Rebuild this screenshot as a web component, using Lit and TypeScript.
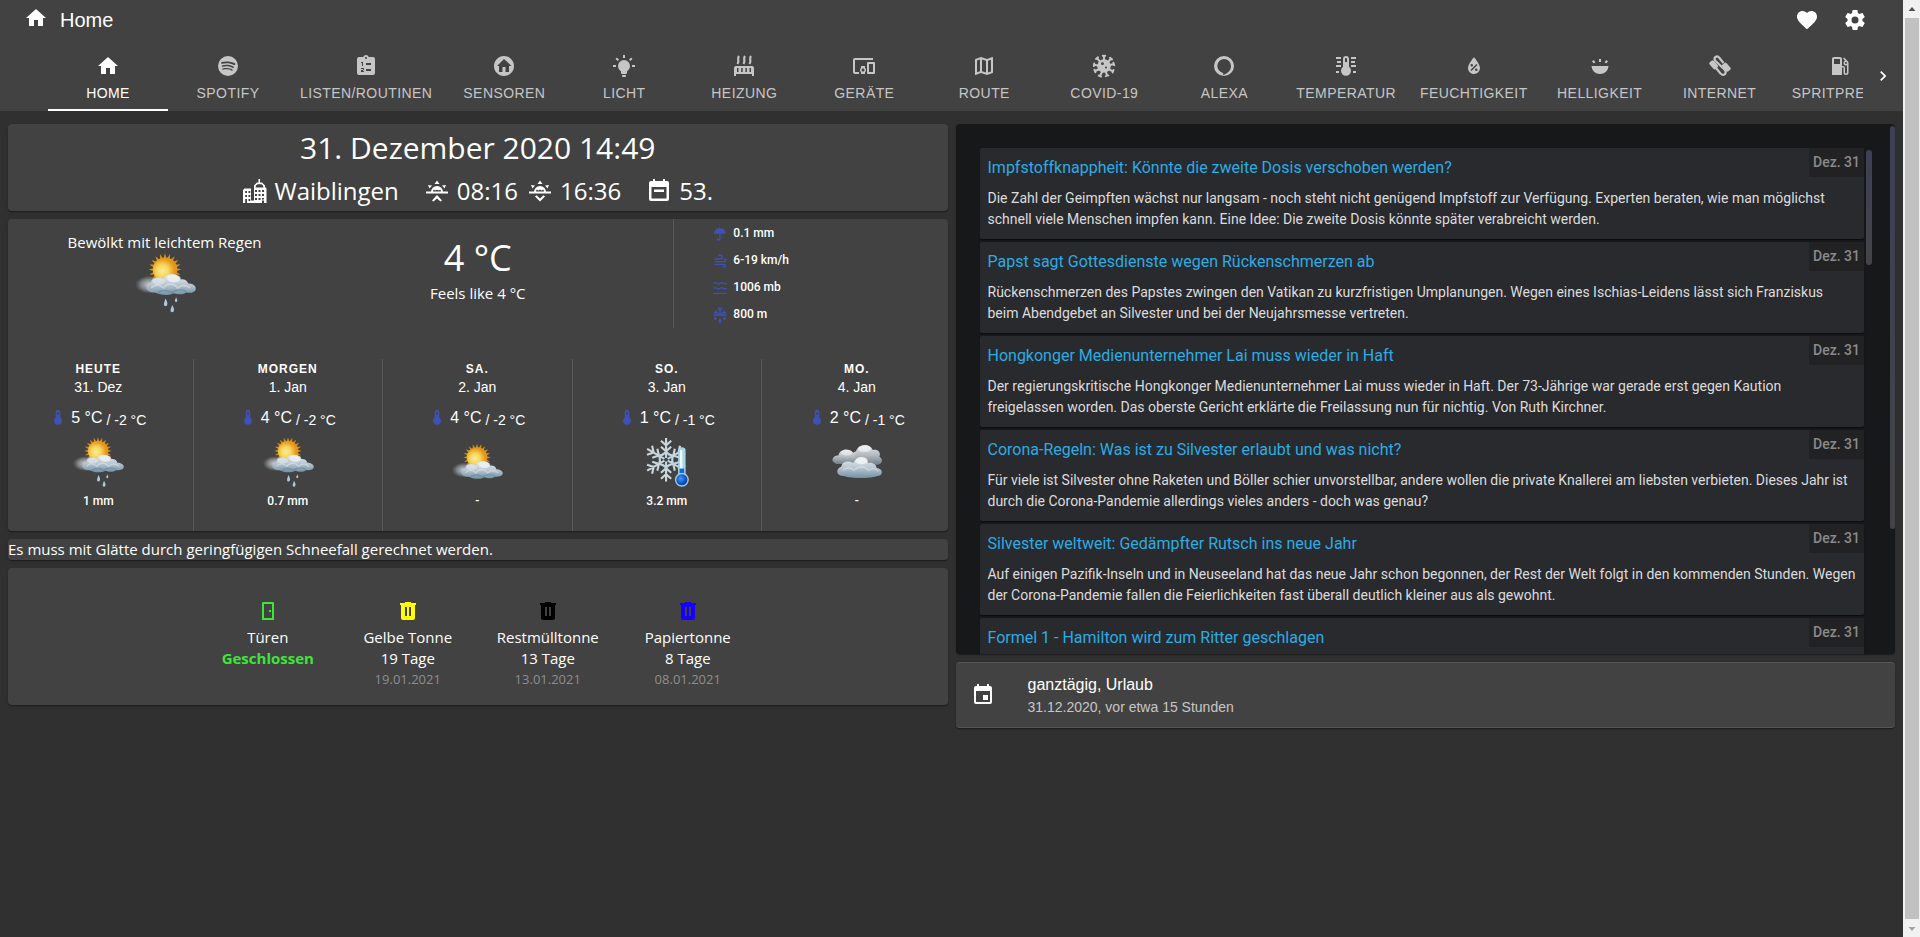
import { LitElement, html, css, svg, nothing } from "lit";
import { customElement, property, state } from "lit/decorators.js";
import { classMap } from "lit/directives/class-map.js";

const ICONS: Record<string, unknown> = {
  home: svg`<path d="M10,20V14H14V20H19V12H22L12,3L2,12H5V20H10Z"/>`,
  spotify: svg`<path d="M17.9,10.9C14.7,9 9.35,8.8 6.3,9.75C5.8,9.9 5.3,9.6 5.15,9.15C5,8.65 5.3,8.15 5.75,8C9.3,6.95 15.15,7.15 18.85,9.35C19.3,9.6 19.45,10.2 19.2,10.65C18.95,11 18.35,11.15 17.9,10.9M17.8,13.7C17.55,14.05 17.1,14.2 16.75,13.95C14.05,12.3 9.95,11.8 6.8,12.8C6.4,12.9 5.95,12.7 5.85,12.3C5.75,11.9 5.95,11.45 6.35,11.35C10,10.25 14.5,10.8 17.6,12.7C17.9,12.85 18.05,13.35 17.8,13.7M16.6,16.45C16.4,16.75 16.05,16.85 15.75,16.65C13.4,15.2 10.45,14.9 6.95,15.7C6.6,15.8 6.3,15.55 6.2,15.25C6.1,14.9 6.35,14.6 6.65,14.5C10.45,13.65 13.75,14 16.35,15.6C16.7,15.75 16.75,16.15 16.6,16.45M12,2A10,10 0 0,0 2,12A10,10 0 0,0 12,22A10,10 0 0,0 22,12A10,10 0 0,0 12,2Z"/>`,
  list: svg`<path fill-rule="evenodd" d="M5,3H9.2A3,3 0 0 1 14.8,3H19A2,2 0 0 1 21,5V19A2,2 0 0 1 19,21H5A2,2 0 0 1 3,19V5A2,2 0 0 1 5,3ZM12,3A1,1 0 1 0 12,5A1,1 0 1 0 12,3ZM12,9V11H17V9ZM12,15V17H17V15ZM7,8V9H8V12H9V8ZM7,14V15H9V16H7V18H10V17H8.4L10,15.6V14Z"/>`,
  sensors: svg`<path d="M19.07,4.93C17.22,3 14.66,1.96 12,2C9.34,1.96 6.79,3 4.94,4.93C3,6.78 1.96,9.34 2,12C1.96,14.66 3,17.21 4.93,19.06C6.78,21 9.34,22.04 12,22C14.66,22.04 17.21,21 19.06,19.07C21,17.22 22.04,14.66 22,12C22.04,9.34 21,6.78 19.07,4.93M17,12V18H13.5V13H10.5V18H7V12H5L12,5L19.5,12H17Z"/>`,
  light: svg`<path d="M12,6A6,6 0 0,1 18,12C18,14.22 16.79,16.16 15,17.2V19A1,1 0 0,1 14,20H10A1,1 0 0,1 9,19V17.2C7.21,16.16 6,14.22 6,12A6,6 0 0,1 12,6M14,21V22A1,1 0 0,1 13,23H11A1,1 0 0,1 10,22V21H14M20,11H23V13H20V11M1,11H4V13H1V11M13,1V4H11V1H13M4.92,3.5L7.05,5.64L5.63,7.05L3.5,4.93L4.92,3.5M16.95,5.63L19.07,3.5L20.5,4.93L18.37,7.05L16.95,5.63Z"/>`,
  heating: svg`<path fill="none" stroke="currentColor" stroke-width="2.200" d="M7,2C4.5,5 8,6 5.5,10M13,2C10.5,5 14,6 11.5,10M19,2C16.5,5 20,6 17.5,10"/><path fill-rule="evenodd" d="M4,12H20A2,2 0 0 1 22,14V22H20V20H4V22H2V14A2,2 0 0 1 4,12ZM5,14V18H6.5V14ZM9.2,14V18H10.7V14ZM13.4,14V18H14.9V14ZM17.5,14V18H19V14Z"/>`,
  devices: svg`<path d="M3 6h18V4H3c-1.1 0-2 .9-2 2v12c0 1.1.9 2 2 2h4v-2H3V6zm10 6H9v1.78c-.61.55-1 1.33-1 2.22s.39 1.67 1 2.22V20h4v-1.78c.61-.55 1-1.34 1-2.22s-.39-1.67-1-2.22V12zm-2 5.5c-.83 0-1.5-.67-1.5-1.5s.67-1.5 1.5-1.5 1.5.67 1.5 1.5-.67 1.5-1.5 1.5zM22 8h-6c-.5 0-1 .5-1 1v10c0 .5.5 1 1 1h6c.5 0 1-.5 1-1V9c0-.5-.5-1-1-1zm-1 10h-4v-8h4v8z"/>`,
  map: svg`<path d="M20.5,3L20.34,3.03L15,5.1L9,3L3.36,4.9C3.15,4.97 3,5.15 3,5.38V20.5A0.5,0.5 0 0,0 3.5,21L3.66,20.97L9,18.9L15,21L20.64,19.1C20.85,19.03 21,18.85 21,18.62V3.5A0.5,0.5 0 0,0 20.5,3M10,5.47L14,6.87V18.53L10,17.13V5.47M5,6.46L8,5.45V17.15L5,18.31V6.46M19,17.54L16,18.55V6.86L19,5.7V17.54Z"/>`,
  virus: svg`<path fill-rule="evenodd" d="M12,5.2A6.8,6.8 0 1 0 12,18.8A6.8,6.8 0 1 0 12,5.2ZM10.5,8.3A1.4,1.4 0 1 1 10.5,11.1A1.4,1.4 0 1 1 10.5,8.3ZM14,12.4A1,1 0 1 1 14,14.4A1,1 0 1 1 14,12.4Z"/><g stroke="currentColor" stroke-width="2" stroke-linecap="round"><path d="M12,6V2M10.8,1.8H13.2M16.5,7.5L19,4.5M18,3.8L20,5.4M18,11L21.8,10M21.4,8.8L22.2,11.3M17.3,15.5L21,17.3M21.5,16L20.6,18.4M14,18L15,21.5M13.8,22.1L16.3,21.4M10,18L8,22M6.8,21.6L9,22.5M6.5,15.5L3,17M2.5,15.8L3.4,18.2M6,11.5L2,10.8M2.2,9.5L1.9,12M7.5,7L5,4.2M4,5L6,3.4"/></g>`,
  alexa: svg`<path fill-rule="evenodd" d="M12,2A10,10 0 1 0 12,22A10,10 0 1 0 12,2ZM12,5A7,7 0 0 1 19,12C19,16 16.500,18.800 11.200,21.200V18.900A7,7 0 0 1 12,5Z"/>`,
  temperature: svg`<path fill-rule="evenodd" d="M9,5A3,3 0 0 1 15,5V12.8A5,5 0 1 1 9,12.8ZM12,4A1,1 0 0 0 11,5V8H13V5A1,1 0 0 0 12,4Z"/><path fill="none" stroke="currentColor" stroke-width="2" d="M2,4H7M3,8H7M2,12H7M2,18H5M17,4H22M17,8H21M17,12H22M19,18H22"/>`,
  humidity: svg`<path d="M12,3.25C12,3.25 6,10 6,14C6,17.32 8.69,20 12,20A6,6 0 0,0 18,14C18,10 12,3.25 12,3.25M14.47,9.97L15.53,11.03L9.53,17.03L8.47,15.97M9.75,10A1.25,1.25 0 0,1 11,11.25A1.25,1.25 0 0,1 9.75,12.5A1.25,1.25 0 0,1 8.5,11.25A1.25,1.25 0 0,1 9.75,10M14.25,14.5A1.25,1.25 0 0,1 15.5,15.75A1.25,1.25 0 0,1 14.25,17A1.25,1.25 0 0,1 13,15.75A1.25,1.25 0 0,1 14.25,14.5Z"/>`,
  brightness: svg`<path d="M3.500,12H20.500A8.500,8 0 0 1 3.500,12ZM11,5H13V8H11ZM4,7.4L5.4,6L7.4,8L6,9.4ZM20,7.4L18.6,6L16.6,8L18,9.4Z"/>`,
  internet: svg`<path fill="none" stroke="currentColor" stroke-width="2.200" d="M8,14L12.500,19.500Q15,22 17,20Q18.500,18 16.500,15.500L7.500,7Q5.500,4.500 7.500,3Q9.500,1.500 11.500,4L15.500,9"/><rect x="3" y="6.500" width="5.500" height="9" rx="1.500" transform="rotate(-42 5.500 11)"/><rect x="15.500" y="8.500" width="5.500" height="9" rx="1.500" transform="rotate(-42 18.500 13)"/>`,
  fuel: svg`<path d="M18,10A1,1 0 0,1 17,9A1,1 0 0,1 18,8A1,1 0 0,1 19,9A1,1 0 0,1 18,10M12,10H6V5H12M19.77,7.23L19.78,7.22L16.06,3.5L15,4.56L17.11,6.67C16.17,7 15.5,7.93 15.5,9A2.5,2.5 0 0,0 18,11.5C18.36,11.5 18.69,11.42 19,11.29V18.5A1,1 0 0,1 18,19.5A1,1 0 0,1 17,18.5V14A2,2 0 0,0 15,12H14V5A2,2 0 0,0 12,3H6C4.89,3 4,3.89 4,5V21H14V13.5H15.5V18.5A2.5,2.5 0 0,0 18,21A2.5,2.5 0 0,0 20.5,18.5V9C20.5,8.31 20.22,7.68 19.77,7.23Z"/>`,
  heart: svg`<path d="M12,21.35L10.55,20.03C5.4,15.36 2,12.27 2,8.5C2,5.41 4.42,3 7.5,3C9.24,3 10.91,3.81 12,5.08C13.09,3.81 14.76,3 16.5,3C19.58,3 22,5.41 22,8.5C22,12.27 18.6,15.36 13.45,20.03L12,21.35Z"/>`,
  cog: svg`<path d="M12,15.5A3.5,3.5 0 0,1 8.5,12A3.5,3.5 0 0,1 12,8.5A3.5,3.5 0 0,1 15.5,12A3.5,3.5 0 0,1 12,15.5M19.43,12.97C19.47,12.65 19.5,12.33 19.5,12C19.5,11.67 19.47,11.34 19.43,11L21.54,9.37C21.73,9.22 21.78,8.95 21.66,8.73L19.66,5.27C19.54,5.05 19.27,4.96 19.05,5.05L16.56,6.05C16.04,5.66 15.5,5.32 14.87,5.07L14.5,2.42C14.46,2.18 14.25,2 14,2H10C9.75,2 9.54,2.18 9.5,2.42L9.13,5.07C8.5,5.32 7.96,5.66 7.44,6.05L4.95,5.05C4.73,4.96 4.46,5.05 4.34,5.27L2.34,8.73C2.21,8.95 2.27,9.22 2.46,9.37L4.57,11C4.53,11.34 4.5,11.67 4.5,12C4.5,12.33 4.53,12.65 4.57,12.97L2.46,14.63C2.27,14.78 2.21,15.05 2.34,15.27L4.34,18.73C4.46,18.95 4.73,19.03 4.95,18.95L7.44,17.94C7.96,18.34 8.5,18.68 9.13,18.93L9.5,21.58C9.54,21.82 9.75,22 10,22H14C14.25,22 14.46,21.82 14.5,21.58L14.87,18.93C15.5,18.67 16.04,18.34 16.56,17.94L19.05,18.95C19.27,19.03 19.54,18.95 19.66,18.73L21.66,15.27C21.78,15.05 21.73,14.78 21.54,14.63L19.43,12.97Z"/>`,
  chevron: svg`<path d="M8.59,16.58L13.17,12L8.59,7.41L10,6L16,12L10,18L8.59,16.58Z"/>`,
  event: svg`<path d="M19,19H5V8H19M16,1V3H8V1H6V3H5C3.89,3 3,3.89 3,5V19A2,2 0 0,0 5,21H19A2,2 0 0,0 21,19V5C21,3.89 20.1,3 19,3H18V1M17,12H12V17H17V12Z"/>`,
  trash: svg`<path d="M9,3V4H4V6H5V19A2,2 0 0,0 7,21H17A2,2 0 0,0 19,19V6H20V4H15V3H9M9,8H11V17H9V8M13,8H15V17H13V8Z"/>`,
  door: svg`<path fill-rule="evenodd" d="M7,3H17A1,1 0 0 1 18,4V21H6V4A1,1 0 0 1 7,3ZM8,5V19H16V5Z"/><path d="M13,11H15V13H13Z"/>`,
  umbrella: svg`<path d="M12,1V3A9,9 0 0 1 21,12Q18.500,10.500 16.500,12Q15,11 13,12V19A3,3 0 0 1 7,19V18H9V19A1,1 0 0 0 11,19V12Q9,11 7.500,12Q5.500,10.500 3,12A9,9 0 0 1 11,3V1Z"/>`,
  wind: svg`<path d="M4,10A1,1 0 0,1 3,9A1,1 0 0,1 4,8H12A2,2 0 0,0 14,6A2,2 0 0,0 12,4C11.45,4 10.95,4.22 10.59,4.59C10.2,5 9.56,5 9.17,4.59C8.78,4.2 8.78,3.56 9.17,3.17C9.9,2.45 10.9,2 12,2A4,4 0 0,1 16,6A4,4 0 0,1 12,10H4M19,12A1,1 0 0,0 20,11A1,1 0 0,0 19,10C18.72,10 18.47,10.11 18.29,10.29C17.9,10.68 17.27,10.68 16.88,10.29C16.5,9.9 16.5,9.27 16.88,8.88C17.42,8.34 18.17,8 19,8A3,3 0 0,1 22,11A3,3 0 0,1 19,14H5A1,1 0 0,1 4,13A1,1 0 0,1 5,12H19M18,18H4A1,1 0 0,1 3,17A1,1 0 0,1 4,16H18A3,3 0 0,1 21,19A3,3 0 0,1 18,22C17.17,22 16.42,21.66 15.88,21.12C15.5,20.73 15.5,20.1 15.88,19.71C16.27,19.32 16.9,19.32 17.29,19.71C17.47,19.89 17.72,20 18,20A1,1 0 0,0 19,19A1,1 0 0,0 18,18Z"/>`,
  pressure: svg`<path fill="none" stroke="currentColor" stroke-width="2" d="M2,20H22M2,12.500Q4.500,10.500 7,12.500T12,12.500T17,12.500T22,12M2,5Q4.500,3 7,5T12,5T17,5T22,4.500"/>`,
  snowmix: svg`<path fill="none" stroke="currentColor" stroke-width="2" d="M12,0V12M2,12H22M9,2L12,5L15,2M5,5L10,11M19,5L14,11M3,8L7,9M21,8L17,9"/><path d="M12,16C13,18.500 14.500,20 14.500,21.500A2.500,2.500 0 0 1 9.500,21.500C9.500,20 11,18.500 12,16ZM5,13.500C6,15.500 7,16.500 7,17.500A2,2 0 0 1 3,17.500C3,16.500 4,15.500 5,13.500ZM19,13.500C20,15.500 21,16.500 21,17.500A2,2 0 0 1 17,17.500C17,16.500 18,15.500 19,13.500Z"/>`,
  thermometer: svg`<path fill-rule="evenodd" d="M8.500,4.500A3.500,3.500 0 0 1 15.500,4.500V12.800A6,6 0 1 1 8.500,12.800ZM12,4A1,1 0 0 0 11,5V9H13V5A1,1 0 0 0 12,4Z"/>`,
  city: svg`<path fill-rule="evenodd" d="M0,11L1.500,9.500H8V21.500H11V6.500L14,3.500H15.500V0H17V3.500H19L22,6.500V8L23.500,9.500V24H21V21.500H19V24H0ZM2.200,12V14H4V12ZM5.500,12V14H7.300V12ZM2.200,16V18H4V16ZM5.500,16V18H7.300V16ZM2.200,20V24H4V20ZM5.500,20V22H7.300V20ZM13,6.500L12.500,8.500H20.500L20,6.500L18.500,5.300H14.500ZM12,11V13H14V11ZM15.500,11V13H17.500V11ZM19,11V13H21V11ZM12,15V17H14V15ZM15.500,15V17H17.500V15ZM19,15V17H21V15ZM12,19V21H14V19ZM15.500,19V21H17.500V19ZM19,19V20.500H21V19Z"/>`,
  sunrise: svg`<path fill="none" stroke="currentColor" stroke-width="2" d="M1,13.500H23M7,13A5,5 0 0 1 17,13M9.500,11A3,3 0 0 1 14.500,11"/><path d="M12,1.500L14.500,5H9.500ZM3,6L7,6.500L4.500,9.500ZM21,6L17,6.500L19.500,9.500ZM12,16L17,21.500L15.500,22.500L12,19.500L8.500,22.500L7,21.500Z"/>`,
  sunset: svg`<path fill="none" stroke="currentColor" stroke-width="2" d="M1,13.500H23M7,13A5,5 0 0 1 17,13M9.500,11A3,3 0 0 1 14.500,11"/><path d="M12,1.500L14.500,5H9.500ZM3,6L7,6.500L4.500,9.500ZM21,6L17,6.500L19.500,9.500ZM12,22.500L17,17.500L15.500,16.200L12,19.500L8.500,16.200L7,17.500Z"/>`,
  week: svg`<path fill-rule="evenodd" d="M6,0H8V2H16V0H18V2H20A2,2 0 0 1 22,4V20A2,2 0 0 1 20,22H4A2,2 0 0 1 2,20V4A2,2 0 0 1 4,2H6ZM4.500,8V19.500H19.500V8ZM7,10.500H17V13H7Z"/>`,
};

@customElement("ui-icon")
class UiIcon extends LitElement {
  @property() name = "";
  static styles = css`
    :host { display: inline-flex; flex: none; width: 24px; height: 24px; }
    svg { width: 100%; height: 100%; fill: currentColor; }
  `;
  render() {
    return html`<svg viewBox="0 0 24 24" aria-hidden="true">${ICONS[this.name] ?? nothing}</svg>`;
  }
}

const RAYS = Array.from({ length: 20 }, (_, i) => {
  const a = (i * Math.PI) / 10;
  const p = (r: number, d: number) => `${(28 + r * Math.cos(a + d)).toFixed(1)},${(15 + r * Math.sin(a + d)).toFixed(1)}`;
  return `M${p(10, -0.15)}L${p(14.8, 0)}L${p(10, 0.15)}Z`;
}).join("");

const SUN = svg`<path d="${RAYS}" fill="#cf9016"/><circle cx="28" cy="15" r="11" fill="url(#sun)"/>`;
const CLOUD = svg`<g transform="translate(-3.600 -3) scale(1.130 1.020)">
  <ellipse cx="16" cy="31" rx="12" ry="8" fill="url(#haze)"/>
  <path fill="url(#cloud)" d="M20,38C12,38 11,31 17,29.500C16,25 23,23 27,26C28,20.500 38,20 40,26.500C43,25.500 46,27.500 46.500,30C50,30 53,32 52.500,35C52,38 48,38.500 45,38C42,40.500 37,39.500 35,38.500C31,41 24,40.500 20,38Z"/>
  <ellipse cx="35" cy="25.500" rx="5.500" ry="3.500" fill="#eef2f6" opacity=".8"/>
  <ellipse cx="23" cy="28" rx="5" ry="3" fill="#dfe6ec" opacity=".6"/>
  <path d="M17,34C20,30 24,31 27,34C29,30 35,29 38,34C41,31 45,31 48,34" fill="none" stroke="#fff" stroke-width="1.400" opacity=".35"/>
  <path d="M22,38C26,35 30,36 33,38C37,35 42,35 45,37" fill="none" stroke="#5f7f95" stroke-width="1.600" opacity=".45"/>
</g>`;
const DROPS = svg`<path transform="translate(0 -2)" fill="#a9cbe0" d="M28.500,43C30,46 30.500,47 30,48.500A1.500,1.500 0 0 1 27,48.500C27,47 27.500,46 28.500,43ZM38,42C39,44 39.200,44.500 39,45.300A1,1 0 0 1 37,45.300C37,44.500 37.200,44 38,42ZM34.500,49C36,52 36.500,53 36,54A1.500,1.500 0 0 1 33,54C33,53 33.500,52 34.500,49Z"/>`;

@customElement("weather-picture")
class WeatherPicture extends LitElement {
  @property() kind = "rain";
  static styles = css`
    :host { display: inline-flex; flex: none; width: 52px; height: 52px; }
    svg { width: 100%; height: 100%; }
  `;
  render() {
    return html`<svg viewBox="0 0 56 56" aria-hidden="true">
      <defs>
        <radialGradient id="sun" cx=".4" cy=".55"><stop offset="0" stop-color="#f9ec96"/><stop offset=".5" stop-color="#f5d75c"/><stop offset="1" stop-color="#e8951c"/></radialGradient>
        <radialGradient id="haze"><stop offset="0" stop-color="#d5dade"/><stop offset=".6" stop-color="#9ba2a8" stop-opacity=".7"/><stop offset="1" stop-color="#8a9096" stop-opacity="0"/></radialGradient>
        <linearGradient id="cloud" x2="0" y2="1"><stop offset="0" stop-color="#e6ebf0"/><stop offset=".5" stop-color="#b9c6d0"/><stop offset="1" stop-color="#7091a6"/></linearGradient>
        <linearGradient id="grey" x2="0" y2="1"><stop offset="0" stop-color="#e4e7ea"/><stop offset=".5" stop-color="#b4bac0"/><stop offset="1" stop-color="#70808c"/></linearGradient>
        <linearGradient id="flake" gradientUnits="userSpaceOnUse" x1="0" y1="0" x2="0" y2="50"><stop offset="0" stop-color="#d3d6d9"/><stop offset="1" stop-color="#a3d0e6"/></linearGradient>
        <radialGradient id="bulb" cx=".4" cy=".4"><stop offset="0" stop-color="#3d9bff"/><stop offset="1" stop-color="#0a4ab8"/></radialGradient>
      </defs>
      ${this.picture()}
    </svg>`;
  }
  private picture() {
    switch (this.kind) {
      case "sun":
        return svg`<g transform="translate(0 7)">${SUN}${CLOUD}</g>`;
      case "cloud":
        return svg`
          <path fill="url(#grey)" d="M6,29C-1,27 1,20 8,20C9,13 19,11 24,17C27,14 32,16 33,21C36,27 30,30 24,29Z"/>
          <path fill="url(#grey)" d="M26,19C27,8 41,5 45,14C51,13 54,17 52,21C57,24 55,30 49,30H28Z"/>
          <ellipse cx="17" cy="17" rx="6" ry="3" fill="#eff1f3" opacity=".6"/><ellipse cx="36" cy="12.500" rx="7" ry="3.500" fill="#f3f4f6" opacity=".7"/>
          <path fill="url(#cloud)" d="M14,42C5,42 5,34 11,32C12,26 19,25 24,28C27,20 38,20 40,28C45,27 49,30 49,33C57,34 56,42 50,42C42,45 22,45 14,42Z"/>
          <ellipse cx="33" cy="25.500" rx="6.500" ry="4" fill="#f4f6f8" opacity=".8"/>
          <path d="M13,36C17,32 22,33 25,36C29,31 37,31 40,36C44,33 48,34 51,37" fill="none" stroke="#fff" stroke-width="1.500" opacity=".35"/>`;
      case "snow":
        return svg`
          <g fill="none" stroke="url(#flake)" stroke-width="2.300">
            ${[0, 60, 120, 180, 240, 300].map(
              (r) => svg`<path transform="rotate(${r} 27 24.500)" d="M27.010,22.500L27,1M21.500,4L27,9L32.500,4M21.500,10.500L27,15.500L32.500,10.500M23.500,19L27,16L30.500,19"/>`,
            )}
          </g>
          <path d="M40,15A4,4 0 0 1 48,15V42H40Z" fill="#a9d6e6"/><path d="M42,14H44.500V35H42Z" fill="#eefaff"/>
          <path d="M41.500,34H46.500V44H41.500Z" fill="#0d66dd"/><circle cx="44" cy="46" r="7.500" fill="#a5cbe0"/><circle cx="44" cy="46" r="6" fill="url(#bulb)"/>`;
      default:
        return svg`${SUN}${CLOUD}${DROPS}`;
    }
  }
}

const TABS: [string, string][] = [
  ["home", "HOME"], ["spotify", "SPOTIFY"], ["list", "LISTEN/ROUTINEN"], ["sensors", "SENSOREN"], ["light", "LICHT"],
  ["heating", "HEIZUNG"], ["devices", "GERÄTE"], ["map", "ROUTE"], ["virus", "COVID-19"], ["alexa", "ALEXA"],
  ["temperature", "TEMPERATUR"], ["humidity", "FEUCHTIGKEIT"], ["brightness", "HELLIGKEIT"], ["internet", "INTERNET"], ["fuel", "SPRITPREISE"],
];
const DETAILS = [["umbrella", "0.1 mm"], ["wind", "6-19 km/h"], ["pressure", "1006 mb"], ["snowmix", "800 m"]];
const FORECAST = [
  { day: "HEUTE", date: "31. Dez", max: "5 °C", min: "-2 °C", kind: "rain", rain: "1 mm" },
  { day: "MORGEN", date: "1. Jan", max: "4 °C", min: "-2 °C", kind: "rain", rain: "0.7 mm" },
  { day: "SA.", date: "2. Jan", max: "4 °C", min: "-2 °C", kind: "sun", rain: "-" },
  { day: "SO.", date: "3. Jan", max: "1 °C", min: "-1 °C", kind: "snow", rain: "3.2 mm" },
  { day: "MO.", date: "4. Jan", max: "2 °C", min: "-1 °C", kind: "cloud", rain: "-" },
];
const STATUS = [
  { icon: "door", tone: "green", label: "Türen", value: "Geschlossen", date: "" },
  { icon: "trash", tone: "yellow", label: "Gelbe Tonne", value: "19 Tage", date: "19.01.2021" },
  { icon: "trash", tone: "black", label: "Restmülltonne", value: "13 Tage", date: "13.01.2021" },
  { icon: "trash", tone: "blue", label: "Papiertonne", value: "8 Tage", date: "08.01.2021" },
];
const NEWS = [
  ["Impfstoffknappheit: Könnte die zweite Dosis verschoben werden?", "Die Zahl der Geimpften wächst nur langsam - noch steht nicht genügend Impfstoff zur Verfügung. Experten beraten, wie man möglichst schnell viele Menschen impfen kann. Eine Idee: Die zweite Dosis könnte später verabreicht werden."],
  ["Papst sagt Gottesdienste wegen Rückenschmerzen ab", "Rückenschmerzen des Papstes zwingen den Vatikan zu kurzfristigen Umplanungen. Wegen eines Ischias-Leidens lässt sich Franziskus beim Abendgebet an Silvester und bei der Neujahrsmesse vertreten."],
  ["Hongkonger Medienunternehmer Lai muss wieder in Haft", "Der regierungskritische Hongkonger Medienunternehmer Lai muss wieder in Haft. Der 73-Jährige war gerade erst gegen Kaution freigelassen worden. Das oberste Gericht erklärte die Freilassung nun für nichtig. Von Ruth Kirchner."],
  ["Corona-Regeln: Was ist zu Silvester erlaubt und was nicht?", "Für viele ist Silvester ohne Raketen und Böller schier unvorstellbar, andere wollen die private Knallerei am liebsten verbieten. Dieses Jahr ist durch die Corona-Pandemie allerdings vieles anders - doch was genau?"],
  ["Silvester weltweit: Gedämpfter Rutsch ins neue Jahr", "Auf einigen Pazifik-Inseln und in Neuseeland hat das neue Jahr schon begonnen, der Rest der Welt folgt in den kommenden Stunden. Wegen der Corona-Pandemie fallen die Feierlichkeiten fast überall deutlich kleiner aus als gewohnt."],
  ["Formel 1 - Hamilton wird zum Ritter geschlagen", ""],
];

@customElement("app-root")
class AppRoot extends LitElement {
  @state() private active = 0;

  static styles = css`
    :host { display: flex; min-height: 100vh; background: #303030; color: #fff; font-family: "Liberation Sans", Arial, sans-serif; font-size: 14px; line-height: 20px; }
    * { box-sizing: border-box; }
    button { border: 0; padding: 0; margin: 0; background: none; color: inherit; font: inherit; cursor: pointer; }
    h1, h2, h3, p { margin: 0; font-weight: 400; }
    .page { flex: 1; min-width: 0; }

    .header { background: #424242; }
    .toolbar { display: flex; align-items: center; height: 40px; padding: 0 36px 0 24px; }
    .toolbar h1 { flex: 1; margin-left: 12px; font-size: 20px; line-height: 24px; }
    .toolbar > ui-icon { margin-bottom: 4px; }
    .actions { display: flex; gap: 24px; }
    .actions button { display: flex; }
    .tabbar { display: flex; padding-left: 48px; }
    .tabs { display: flex; flex: 1; min-width: 0; overflow: hidden; }
    .tab { display: flex; flex: none; flex-direction: column; align-items: center; min-width: 120px; height: 71px; padding: 14px 12px 0; gap: 5px; border-bottom: 2px solid transparent; color: #c6c6c6; letter-spacing: 0.03em; white-space: nowrap; }
    .tab.active { color: #fff; border-color: #fff; }
    .more { display: flex; align-items: center; justify-content: center; width: 40px; }
    .more ui-icon { width: 20px; height: 20px; }

    .columns { display: grid; grid-template-columns: 1fr 1fr; align-items: start; gap: 8px; padding: 13px 8px; }
    .column { display: grid; gap: 8px; min-width: 0; }
    .card { background: #424242; border-radius: 4px; box-shadow: 0 2px 1px -1px rgba(0, 0, 0, 0.2), 0 1px 1px rgba(0, 0, 0, 0.14), 0 1px 3px rgba(0, 0, 0, 0.12); }
    .segoe { font-family: "Open Sans", "Noto Sans", sans-serif; font-size: 15px; line-height: 21px; }

    .clock { display: flex; flex-direction: column; align-items: center; padding: 2px 0; }
    .clock h2 { font-size: 30px; line-height: 44px; }
    .facts { display: flex; margin-top: 3px; font-size: 24px; line-height: 36px; }
    .fact { display: flex; align-items: center; gap: 8px; margin-right: 10px; }
    .fact.wide { margin-right: 26px; }
    .fact.last { margin-right: 0; }

    .now { display: grid; grid-template-columns: 1fr 1fr 1fr; height: 108px; }
    .summary { display: flex; flex-direction: column; align-items: center; padding-top: 13px; }
    .summary weather-picture { width: 62px; height: 62px; }
    .temp { display: flex; flex-direction: column; align-items: center; padding-top: 16px; }
    .temp strong { font-size: 36px; line-height: 46px; font-weight: 400; }
    .temp span { line-height: 24px; }
    .details { display: grid; margin: 0 0 0 39px; padding: 1px 0 0 38px; border-left: 1px solid #5a5a5a; list-style: none; }
    .details li { display: flex; align-items: center; gap: 5px; font: 500 12px/27px Roboto, sans-serif; }
    .details ui-icon { width: 16px; height: 16px; color: #3f51b5; }
    .forecast { display: grid; grid-template-columns: repeat(5, 1fr); height: 172px; margin: 32px -4px 0; }
    .day { display: flex; flex-direction: column; align-items: center; border-right: 1px solid #5a5a5a; }
    .day:last-child { border-right: 0; }
    .day h3 { font-size: 12px; font-weight: 700; line-height: 21px; letter-spacing: 1px; }
    .day p { line-height: 15px; }
    .range { display: flex; align-items: center; height: 30px; margin-top: 7px; }
    .range ui-icon { width: 16px; height: 16px; margin-right: 5px; color: #3f51b5; }
    .range b { padding-top: 1px; font-size: 16px; font-weight: 400; margin-right: 4px; }
    .range span { padding-top: 5px; }
    .day weather-picture { margin-top: 5px; }
    .rain { font: 500 12px/16px Roboto, sans-serif; margin-top: 4px; }

    .status { display: flex; justify-content: center; min-height: 137px; padding-top: 31px; }
    .item { display: flex; flex-direction: column; align-items: center; width: 140px; }
    .item ui-icon { margin-bottom: 4px; }
    .green { color: #3ce836; }
    .yellow { color: #ffff00; }
    .black { color: #000; }
    .blue { color: #1500ff; }
    .item .date { color: #8d8d8d; font-size: 13px; }
    .item b { font-weight: 700; }

    .news { display: flex; height: 530px; padding-left: 24px; overflow: hidden; background: #17181a; font-family: Roboto, sans-serif; }
    .list { flex: 1; min-width: 0; display: flex; flex-direction: column; gap: 3px; margin-top: 24px; }
    .article { position: relative; flex: none; min-height: 91px; padding: 9px 8px; background: #292a2e; border-radius: 2px; box-shadow: 0 1px 1px rgba(0, 0, 0, 0.5); color: #dcdcdc; line-height: 21px; }
    .article a { display: block; margin-bottom: 9px; color: #2cace3; font-size: 16px; line-height: 22px; text-decoration: none; }
    .badge { position: absolute; top: 0; right: 0; padding: 4px; background: #222224; border-radius: 0 0 0 2px; color: #8a8a8a; font-weight: 500; }
    .rail { width: 6px; margin: 26px 18px 0 2px; }
    .rail.outer { width: 5px; margin: 2px 0 0; }
    .thumb { height: 115px; border-radius: 3px; background: linear-gradient(#3d3f55, #444446); }
    .outer .thumb { height: 403px; }

    .event { display: flex; align-items: center; min-height: 66px; padding: 0 15px; gap: 33px; border: solid #565656; border-width: 1px 0; }
    .event h3 { font-size: 16px; line-height: 24px; }
    .event p { color: #c6c6c6; line-height: 21px; }

    .scrollbar { display: flex; flex-direction: column; flex: none; width: 17px; height: 100vh; padding: 0 1px 0 2px; background: #f1f1f1; }
    .scrollbar svg { width: 14px; height: 17px; }
    .track { flex: 1; margin: 1px 0; background: #c1c1c1; }
  `;

  render() {
    return html`
      <div class="page">
        <header class="header">
          <div class="toolbar">
            <ui-icon name="home"></ui-icon>
            <h1>Home</h1>
            <div class="actions">
              <button aria-label="Favoriten"><ui-icon name="heart"></ui-icon></button>
              <button aria-label="Einstellungen"><ui-icon name="cog"></ui-icon></button>
            </div>
          </div>
          <nav class="tabbar">
            <div class="tabs" role="tablist">
              ${TABS.map(
                ([icon, label], i) => html`<button role="tab" class=${classMap({ tab: true, active: i === this.active })}
                  aria-selected=${i === this.active} @click=${() => (this.active = i)}><ui-icon name=${icon}></ui-icon><span>${label}</span></button>`,
              )}
            </div>
            <button class="more" aria-label="Weiter"><ui-icon name="chevron"></ui-icon></button>
          </nav>
        </header>
        <main class="columns">
          <div class="column">${this.clock()}${this.weather()}
            <p class="card segoe">Es muss mit Glätte durch geringfügigen Schneefall gerechnet werden.</p>
            ${this.status()}
          </div>
          <div class="column">${this.news()}
            <section class="card event">
              <ui-icon name="event"></ui-icon>
              <div><h3>ganztägig, Urlaub</h3><p>31.12.2020, vor etwa 15 Stunden</p></div>
            </section>
          </div>
        </main>
      </div>
      <div class="scrollbar" aria-hidden="true">
        <svg viewBox="0 0 14 17"><path fill="#505050" d="M3.500,11L7,7L10.500,11Z"/></svg>
        <div class="track"></div>
        <svg viewBox="0 0 14 17"><path fill="#a3a3a3" d="M3.500,7L7,11L10.500,7Z"/></svg>
      </div>
    `;
  }

  private clock() {
    return html`<section class="card segoe clock">
      <h2>31. Dezember 2020 14:49</h2>
      <div class="facts">
        <span class="fact wide"><ui-icon name="city"></ui-icon>Waiblingen</span>
        <span class="fact"><ui-icon name="sunrise"></ui-icon>08:16</span>
        <span class="fact wide"><ui-icon name="sunset"></ui-icon>16:36</span>
        <span class="fact last"><ui-icon name="week"></ui-icon>53.</span>
      </div>
    </section>`;
  }

  private weather() {
    return html`<section class="card">
      <div class="now">
        <div class="summary segoe"><span>Bewölkt mit leichtem Regen</span><weather-picture kind="rain"></weather-picture></div>
        <div class="temp segoe"><strong>4 °C</strong><span>Feels like 4 °C</span></div>
        <ul class="details">
          ${DETAILS.map(([icon, text]) => html`<li><ui-icon name=${icon}></ui-icon>${text}</li>`)}
        </ul>
      </div>
      <div class="forecast">
        ${FORECAST.map(
          (d) => html`<div class="day">
            <h3>${d.day}</h3>
            <p>${d.date}</p>
            <div class="range"><ui-icon name="thermometer"></ui-icon><b>${d.max}</b><span>/ ${d.min}</span></div>
            <weather-picture kind=${d.kind}></weather-picture>
            <div class="rain">${d.rain}</div>
          </div>`,
        )}
      </div>
    </section>`;
  }

  private status() {
    return html`<section class="card segoe status">
      ${STATUS.map(
        (s) => html`<div class="item">
          <ui-icon class=${s.tone} name=${s.icon}></ui-icon>
          <span>${s.label}</span>
          ${s.date ? html`<span>${s.value}</span><span class="date">${s.date}</span>` : html`<b class="green">${s.value}</b>`}
        </div>`,
      )}
    </section>`;
  }

  private news() {
    return html`<section class="card news">
      <div class="list">
        ${NEWS.map(
          ([title, text]) => html`<article class="article">
            <a href="#">${title}</a>
            <p>${text}</p>
            <span class="badge">Dez. 31</span>
          </article>`,
        )}
      </div>
      <div class="rail"><div class="thumb"></div></div>
      <div class="rail outer"><div class="thumb"></div></div>
    </section>`;
  }
}
